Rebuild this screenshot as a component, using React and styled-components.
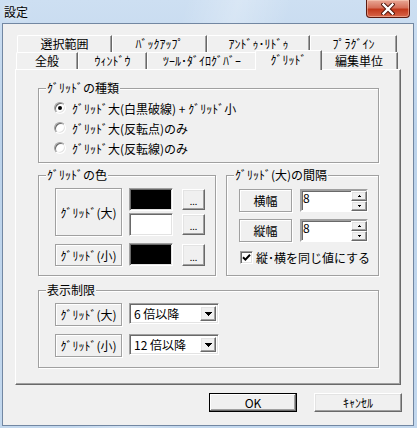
import React from 'react';
import styled, { createGlobalStyle, css } from 'styled-components';

const GlobalStyle = createGlobalStyle`
  html, body { margin: 0; padding: 0; }
  body {
    width: 417px;
    height: 428px;
    overflow: hidden;
    font-family: "Noto Sans CJK JP", "Liberation Sans", sans-serif;
    font-size: 12px;
    color: #000;
  }
  * { box-sizing: border-box; }
`;

// classic 3D edges
const raised = css`
  border: 1px solid;
  border-color: #fff #696969 #696969 #fff;
  box-shadow: inset -1px -1px 0 #a0a0a0, inset 1px 1px 0 #e3e3e3;
`;

const sunken = css`
  border: 1px solid;
  border-color: #a0a0a0 #fff #fff #a0a0a0;
  box-shadow: inset 1px 1px 0 #696969, inset -1px -1px 0 #e3e3e3;
`;

const etched = css`
  border: 1px solid #a0a0a0;
  box-shadow: inset 1px 1px 0 #fff, 1px 1px 0 #fff;
`;

const Window = styled.div`
  width: 417px;
  height: 428px;
  display: flex;
  flex-direction: column;
  padding: 0 3px 2px 2px;
  background:
    linear-gradient(105deg, transparent 35%, rgba(255, 255, 255, 0.25) 45%, transparent 55%),
    linear-gradient(#cddff2, #bcd3eb 30%, #c3d8ee);
`;

const TitleBar = styled.div`
  height: 23px;
  display: flex;
  justify-content: space-between;
  align-items: flex-start;
`;

const Title = styled.div`
  padding: 5px 0 0 2px;
  line-height: 14px;
  text-shadow: 0 0 5px rgba(255, 255, 255, 0.9);
`;

const CloseButton = styled.div`
  width: 44px;
  height: 18px;
  margin-right: 4px;
  display: flex;
  align-items: center;
  justify-content: center;
  border: 1px solid #5b1a10;
  border-top: none;
  border-radius: 0 0 4px 4px;
  background: linear-gradient(#e9a896, #d6705a 45%, #c2391c 55%, #d8664a);
  box-shadow: inset 0 0 0 1px rgba(255, 220, 200, 0.45);
`;

const CloseGlyph = () => (
  <svg width="14" height="12" viewBox="0 0 14 12">
    <path d="M2.5 1.5 L11.5 10.5 M11.5 1.5 L2.5 10.5" stroke="#4a1208" strokeWidth="4.2" strokeLinecap="square" />
    <path d="M2.5 1.5 L11.5 10.5 M11.5 1.5 L2.5 10.5" stroke="#fff" strokeWidth="2.4" strokeLinecap="square" />
  </svg>
);

const Client = styled.div`
  flex: 1;
  display: flex;
  flex-direction: column;
  background: #f0f0f0;
  border: 1px solid #7287a2;
`;

const TabControl = styled.div`
  width: 386px;
  margin: 11px 0 0 12px;
  display: flex;
  flex-direction: column;
`;

const TabRow = styled.div`
  height: 17px;
  display: flex;
  padding-left: ${p => p.$indent}px;
`;

const Tab = styled.div`
  width: ${p => p.$w}px;
  height: 17px;
  flex: none;
  display: flex;
  align-items: center;
  justify-content: center;
  white-space: nowrap;
  line-height: 14px;
  background: #f0f0f0;
  border-top: 1px solid #fff;
  border-left: 1px solid #fff;
  border-right: 1px solid #696969;
  border-radius: 2px 0 0 0;
  box-shadow: inset -1px 0 0 #a0a0a0;
  ${p => p.$active && css`
    width: ${p.$w + 4}px;
    height: 20px;
    margin: -2px -2px -1px;
    padding-bottom: 2px;
    z-index: 2;
  `}
`;

const Panel = styled.div`
  height: 316px;
  display: flex;
  flex-direction: column;
  padding: 18px 21px 0 22px;
  border: 1px solid;
  border-color: #fff #696969 #696969 #fff;
  box-shadow: inset -1px -1px 0 #a0a0a0;
`;

const Group = styled.div`
  position: relative;
  width: ${p => (p.$w ? `${p.$w}px` : 'auto')};
  height: ${p => p.$h}px;
  margin-top: ${p => p.$mt || 0}px;
  padding: ${p => p.$pad};
  ${etched}
`;

const Caption = styled.div`
  position: absolute;
  top: -8px;
  left: 7px;
  padding: 0 1px;
  line-height: 14px;
  background: #f0f0f0;
  white-space: nowrap;
`;

const GroupRow = styled.div`
  display: flex;
  gap: 10px;
  margin-top: 12px;
`;

const RadioRow = styled.div`
  height: 20px;
  display: flex;
  align-items: center;
  gap: 6px;
  white-space: nowrap;
`;

const RadioDot = styled.span`
  width: 12px;
  height: 12px;
  flex: none;
  border-radius: 50%;
  display: flex;
  align-items: center;
  justify-content: center;
  background: #fff;
  border: 1px solid;
  border-color: #a0a0a0 #fff #fff #a0a0a0;
  box-shadow: inset 1px 1px 0 #696969, inset -1px -1px 0 #e3e3e3;

  &::after {
    content: '';
    width: 4px;
    height: 4px;
    border-radius: 50%;
    background: ${p => (p.$on ? '#000' : 'transparent')};
  }
`;

const ColorGrid = styled.div`
  display: grid;
  grid-template-columns: 67px 44px 25px;
  grid-template-rows: 23px 23px 28px;
  column-gap: 7px;
  row-gap: 2px;
`;

const FrameLabel = styled.div`
  display: flex;
  align-items: center;
  justify-content: center;
  white-space: nowrap;
  grid-row: ${p => p.$rows || 'auto'};
  align-self: ${p => p.$align || 'stretch'};
  height: ${p => (p.$h ? `${p.$h}px` : 'auto')};
  ${etched}
`;

const Swatch = styled.div`
  background: ${p => p.$color};
  align-self: ${p => p.$align || 'stretch'};
  height: 23px;
  ${sunken}
`;

const MoreButton = styled.div`
  height: ${p => p.$h || 21}px;
  margin-left: 2px;
  align-self: ${p => p.$align || 'center'};
  display: flex;
  align-items: flex-end;
  justify-content: center;
  padding-bottom: 3px;
  font-size: 9px;
  line-height: 9px;
  background: #f0f0f0;
  ${raised}
`;

const SpacingGrid = styled.div`
  display: grid;
  grid-template-columns: 53px 68px;
  grid-template-rows: 23px 23px;
  column-gap: 8px;
  row-gap: 7px;
`;

const EditBox = styled.div`
  display: flex;
  background: #fff;
  ${sunken}
  border-width: 2px;
  border-color: #a0a0a0 #fff #fff #a0a0a0;
  box-shadow: inset 1px 1px 0 #696969;
`;

const EditValue = styled.div`
  flex: 1;
  padding: 0 0 0 1px;
  line-height: 14px;
`;

const Spin = styled.div`
  width: 16px;
  display: flex;
  flex-direction: column;
  margin: 0 -1px -1px 0;
`;

const SpinButton = styled.div`
  flex: 1;
  display: flex;
  align-items: center;
  justify-content: center;
  background: #f0f0f0;
  ${raised}
`;

const CheckRow = styled.div`
  margin: 9px 0 0 1px;
  height: 13px;
  display: flex;
  align-items: center;
  gap: 3px;
  white-space: nowrap;
`;

const CheckBox = styled.span`
  width: 13px;
  height: 13px;
  flex: none;
  display: flex;
  align-items: center;
  justify-content: center;
  background: #fff;
  ${sunken}
`;

const LimitGrid = styled.div`
  display: grid;
  grid-template-columns: 67px 90px;
  grid-template-rows: 23px 23px;
  column-gap: 7px;
  row-gap: 8px;
`;

const Combo = styled.div`
  height: 21px;
  display: flex;
  background: #fff;
  padding: 2px;
  ${sunken}
`;

const ComboValue = styled.div`
  flex: 1;
  padding-left: 2px;
  line-height: 15px;
  white-space: nowrap;
`;

const DropButton = styled.div`
  width: 16px;
  display: flex;
  align-items: center;
  justify-content: center;
  background: #f0f0f0;
  ${raised}
`;

const ButtonRow = styled.div`
  display: flex;
  justify-content: flex-end;
  gap: 17px;
  margin-top: 8px;
  padding-right: 11px;
`;

const PushButton = styled.div`
  width: 88px;
  height: 19px;
  display: flex;
  align-items: center;
  justify-content: center;
  line-height: 14px;
  background: #f0f0f0;
  ${raised}
  ${p => p.$default && css`
    border-color: #000;
    box-shadow: inset -1px -1px 0 #696969, inset 1px 1px 0 #fff, inset -2px -2px 0 #a0a0a0;
  `}
`;

// stepped triangle for spin / drop-down arrows
const Tri = ({ w, up }) => {
  const rows = Math.ceil(w / 2);
  return (
    <svg width={w} height={rows} shapeRendering="crispEdges">
      {Array.from({ length: rows }, (_, i) => (
        <rect key={i} x={i} y={up ? rows - 1 - i : i} width={w - 2 * i} height={1} fill="#000" />
      ))}
    </svg>
  );
};

const Check = () => (
  <svg width="9" height="9" viewBox="0 0 9 9">
    <path d="M1 4.2 L3.4 6.6 L8 1.8" fill="none" stroke="#000" strokeWidth="2" />
  </svg>
);

const backTabs = [
  { label: '選択範囲', w: 95 },
  { label: 'ﾊﾞｯｸｱｯﾌﾟ', w: 95 },
  { label: 'ｱﾝﾄﾞｩ･ﾘﾄﾞｩ', w: 103 },
  { label: 'ﾌﾟﾗｸﾞｲﾝ', w: 87 },
];

const frontTabs = [
  { label: '全般', w: 62 },
  { label: 'ｳｨﾝﾄﾞｳ', w: 69 },
  { label: 'ﾂｰﾙ･ﾀﾞｲﾛｸﾞﾊﾞｰ', w: 110 },
  { label: 'ｸﾞﾘｯﾄﾞ', w: 63, active: true },
  { label: '編集単位', w: 78 },
];

const gridKinds = [
  { label: 'ｸﾞﾘｯﾄﾞ大(白黒破線) + ｸﾞﾘｯﾄﾞ小', on: true },
  { label: 'ｸﾞﾘｯﾄﾞ大(反転点)のみ' },
  { label: 'ｸﾞﾘｯﾄﾞ大(反転線)のみ' },
];

const SpinEdit = ({ value }) => (
  <EditBox>
    <EditValue>{value}</EditValue>
    <Spin>
      <SpinButton><Tri w={3} up /></SpinButton>
      <SpinButton><Tri w={3} /></SpinButton>
    </Spin>
  </EditBox>
);

const ComboBox = ({ value }) => (
  <Combo>
    <ComboValue>{value}</ComboValue>
    <DropButton><Tri w={7} /></DropButton>
  </Combo>
);

export default function App() {
  return (
    <>
      <GlobalStyle />
      <Window>
        <TitleBar>
          <Title>設定</Title>
          <CloseButton>
            <CloseGlyph />
          </CloseButton>
        </TitleBar>
        <Client>
          <TabControl>
            <TabRow $indent={2}>
              {backTabs.map(t => (
                <Tab key={t.label} $w={t.w}>{t.label}</Tab>
              ))}
            </TabRow>
            <TabRow $indent={1}>
              {frontTabs.map(t => (
                <Tab key={t.label} $w={t.w} $active={t.active}>{t.label}</Tab>
              ))}
            </TabRow>
            <Panel>
              <Group $h={75} $pad="9px 0 0 15px">
                <Caption>ｸﾞﾘｯﾄﾞの種類</Caption>
                {gridKinds.map(k => (
                  <RadioRow key={k.label}>
                    <RadioDot $on={k.on} />
                    {k.label}
                  </RadioRow>
                ))}
              </Group>

              <GroupRow>
                <Group $w={178} $h={101} $pad="12px 0 0 16px">
                  <Caption>ｸﾞﾘｯﾄﾞの色</Caption>
                  <ColorGrid>
                    <FrameLabel $rows="1 / 3">ｸﾞﾘｯﾄﾞ(大)</FrameLabel>
                    <Swatch $color="#000" />
                    <MoreButton>...</MoreButton>
                    <Swatch $color="#fff" />
                    <MoreButton>...</MoreButton>
                    <FrameLabel $align="end" $h={22}>ｸﾞﾘｯﾄﾞ(小)</FrameLabel>
                    <Swatch $color="#000" $align="end" />
                    <MoreButton $align="end" $h={22}>...</MoreButton>
                  </ColorGrid>
                </Group>

                <Group $w={153} $h={101} $pad="13px 0 0 12px">
                  <Caption>ｸﾞﾘｯﾄﾞ(大)の間隔</Caption>
                  <SpacingGrid>
                    <FrameLabel>横幅</FrameLabel>
                    <SpinEdit value="8" />
                    <FrameLabel>縦幅</FrameLabel>
                    <SpinEdit value="8" />
                  </SpacingGrid>
                  <CheckRow>
                    <CheckBox><Check /></CheckBox>
                    縦･横を同じ値にする
                  </CheckRow>
                </Group>
              </GroupRow>

              <Group $h={78} $mt={14} $pad="12px 0 0 16px">
                <Caption>表示制限</Caption>
                <LimitGrid>
                  <FrameLabel>ｸﾞﾘｯﾄﾞ(大)</FrameLabel>
                  <ComboBox value="6 倍以降" />
                  <FrameLabel>ｸﾞﾘｯﾄﾞ(小)</FrameLabel>
                  <ComboBox value="12 倍以降" />
                </LimitGrid>
              </Group>
            </Panel>
          </TabControl>
          <ButtonRow>
            <PushButton $default>OK</PushButton>
            <PushButton>ｷｬﾝｾﾙ</PushButton>
          </ButtonRow>
        </Client>
      </Window>
    </>
  );
}
